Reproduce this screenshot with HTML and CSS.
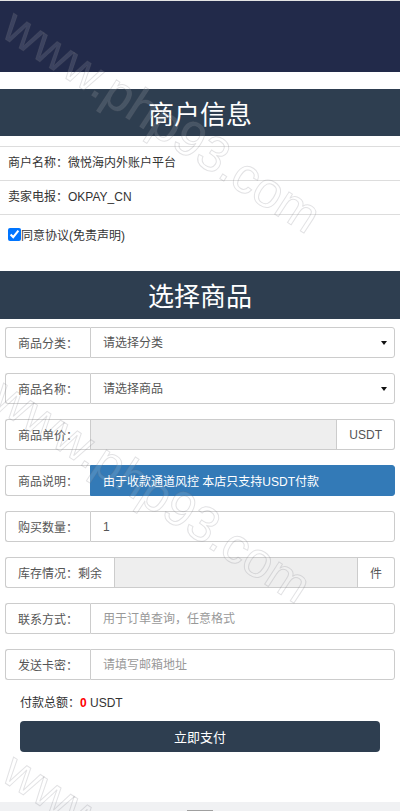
FILE: index.html
```html
<!DOCTYPE html>
<html lang="zh-CN">
<head>
<meta charset="utf-8">
<title>商户信息</title>
<link rel="stylesheet" href="styles.css">
</head>
<body>
<div class="page">
  <div class="topbar"></div>
  <h2 class="section-title first">商户信息</h2>
  <ul class="info-list">
    <li>商户名称：微悦海内外账户平台</li>
    <li>卖家电报：OKPAY_CN</li>
  </ul>
  <label class="agree"><input type="checkbox" checked>同意协议(免责声明)</label>
  <h2 class="section-title second">选择商品</h2>
  <form class="order">
    <div class="group">
      <span class="addon">商品分类：</span>
      <div class="select-wrap"><select class="control"><option>请选择分类</option></select></div>
    </div>
    <div class="group">
      <span class="addon">商品名称：</span>
      <div class="select-wrap"><select class="control"><option>请选择商品</option></select></div>
    </div>
    <div class="group">
      <span class="addon">商品单价：</span>
      <input class="control readonly mid" type="text" readonly>
      <span class="addon end">USDT</span>
    </div>
    <div class="group">
      <span class="addon">商品说明：</span>
      <div class="control notice">由于收款通道风控 本店只支持USDT付款</div>
    </div>
    <div class="group">
      <span class="addon">购买数量：</span>
      <input class="control" type="text" value="1">
    </div>
    <div class="group">
      <span class="addon">库存情况：剩余</span>
      <input class="control readonly mid" type="text" readonly>
      <span class="addon end">件</span>
    </div>
    <div class="group">
      <span class="addon">联系方式：</span>
      <input class="control" type="text" placeholder="用于订单查询，任意格式">
    </div>
    <div class="group">
      <span class="addon">发送卡密：</span>
      <input class="control" type="text" placeholder="请填写邮箱地址">
    </div>
  </form>
  <div class="total">付款总额：<b class="amount">0</b> USDT</div>
  <button class="pay" type="button">立即支付</button>
  <div class="bottom-bar"><span class="handle"></span></div>

  <div class="watermarks" aria-hidden="true">
    <span class="wm wm1">www.php93.com</span>
    <span class="wm wm2">www.php93.com</span>
    <span class="wm wm3">www.php93.com</span>
  </div>
</div>
</body>
</html>
```

FILE: styles.css
```css
* { box-sizing: border-box; }

html, body {
  margin: 0;
  padding: 0;
  background: #fff;
}

body {
  font-family: "Liberation Sans", "Noto Sans CJK SC", sans-serif;
  font-size: 12px;
  color: #333;
}

.page {
  position: relative;
  width: 400px;
  height: 811px;
  overflow: hidden;
  display: flex;
  flex-direction: column;
}

.topbar {
  height: 72px;
  flex: none;
  border-top: 1px solid #e4e4e4;
  background: #222a4a;
}

.section-title {
  margin: 0;
  flex: none;
  background: #2e3e50;
  color: #fff;
  font-family: "Noto Sans CJK SC", sans-serif;
  font-weight: normal;
  font-size: 26px;
  text-align: center;
}

.section-title.first {
  margin-top: 17px;
  height: 47px;
  line-height: 47px;
}

.section-title.second {
  height: 48px;
  line-height: 47px;
}

.info-list {
  list-style: none;
  margin: 10px 0 0;
  padding: 0;
  border-top: 1px solid #dddddd;
}

.info-list li {
  height: 34px;
  line-height: 33px;
  padding: 0 8px;
  border-bottom: 1px solid #dddddd;
  color: #333;
}

.agree {
  display: flex;
  align-items: center;
  height: 14px;
  margin: 12px 0 30px 8px;
  color: #333;
  font-size: 12px;
}

.agree input {
  margin: 0;
  width: 13px;
  height: 13px;
}

.order {
  display: flex;
  flex-direction: column;
  gap: 15px;
  padding: 8px 5px 0;
}

.group {
  display: flex;
  height: 31px;
}

.addon {
  flex: none;
  display: flex;
  align-items: center;
  padding: 0 12px;
  border: 1px solid #cccccc;
  border-right: 0;
  border-radius: 3px 0 0 3px;
  background: #fff;
  color: #555;
  font-size: 12px;
}

.addon.end {
  border-right: 1px solid #cccccc;
  border-left: 0;
  border-radius: 0 3px 3px 0;
}

.control {
  flex: 1;
  min-width: 0;
  height: 31px;
  margin: 0;
  padding: 0 12px;
  border: 1px solid #cccccc;
  border-radius: 0 3px 3px 0;
  background: #fff;
  color: #555;
  font-family: inherit;
  font-size: 12px;
  outline: none;
}

.control::placeholder {
  color: #999;
}

.control.mid {
  border-radius: 0;
}

.control.readonly {
  background: #eeeeee;
}

.control.notice {
  display: flex;
  align-items: center;
  background: #337ab7;
  border-color: #337ab7;
  color: #fff;
}

.select-wrap {
  flex: 1;
  display: flex;
  position: relative;
}

.select-wrap select {
  appearance: none;
  -webkit-appearance: none;
}

.select-wrap::after {
  content: "";
  position: absolute;
  right: 8px;
  top: 14px;
  border-left: 3.5px solid transparent;
  border-right: 3.5px solid transparent;
  border-top: 4px solid #111;
}

.total {
  margin: 13px 0 0 20px;
  height: 20px;
  line-height: 20px;
  color: #333;
  font-size: 12px;
}

.amount {
  color: #ff0000;
  font-weight: bold;
}

.pay {
  margin: 8px 20px 0;
  height: 31px;
  border: 0;
  border-radius: 4px;
  background: #2e3e50;
  color: #fff;
  font-family: "Noto Sans CJK SC", sans-serif;
  font-size: 13px;
}

.bottom-bar {
  margin-top: auto;
  height: 9px;
  background: #f0f1f3;
  display: flex;
  justify-content: center;
  align-items: flex-end;
}

.handle {
  width: 26px;
  height: 1px;
  background: #a0a0a0;
}

.watermarks {
  position: absolute;
  inset: 0;
  pointer-events: none;
  overflow: hidden;
}

.wm {
  position: absolute;
  font-family: "Liberation Sans", sans-serif;
  font-size: 50px;
  line-height: 1;
  white-space: nowrap;
  color: rgba(255, 255, 255, 0.12);
  -webkit-text-stroke: 1px rgba(110, 110, 120, 0.2);
  transform: rotate(33deg);
  transform-origin: 0 0;
}

.wm1 { left: 22px; top: 0; }
.wm2 { left: 12px; top: 370px; }
.wm3 { left: 22px; top: 744px; }
```
